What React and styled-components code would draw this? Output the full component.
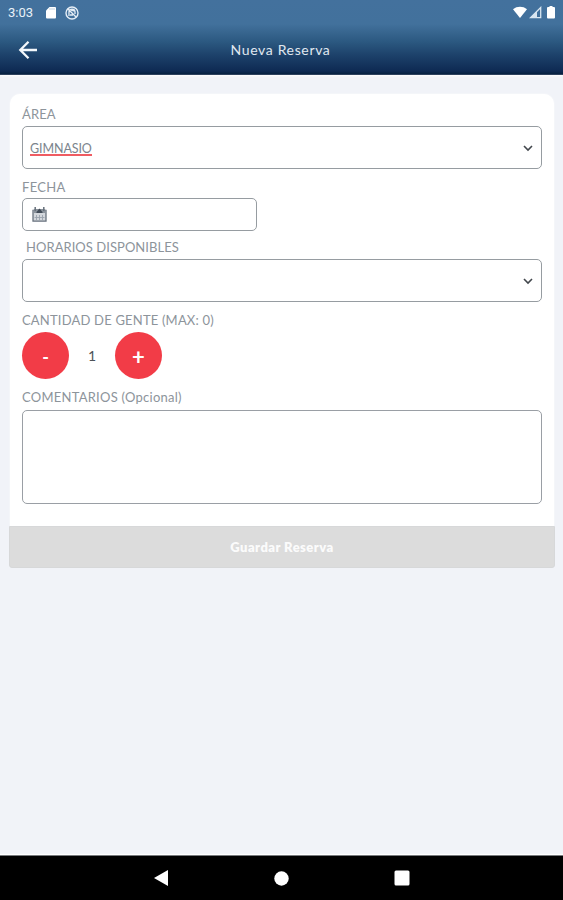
import React from "react";
import styled, { createGlobalStyle } from "styled-components";

const GlobalStyle = createGlobalStyle`
  *, *::before, *::after { box-sizing: border-box; }
  body { margin: 0; background: #f1f3f8; }
  button, input, textarea { font: inherit; }
`;

const Screen = styled.div`
  display: flex;
  flex-direction: column;
  height: 900px;
  background: #f1f3f8;
  font-family: Lato, "Noto Sans", sans-serif;
  color: #7b838c;
`;

const TopArea = styled.header`
  height: 75px;
  flex: none;
  background: linear-gradient(#43719d 0, #42719c 24px, #2b5880 42px, #1c4069 56px, #0e2a53 71px, #06203f 74px, #53617c 75px);
  color: #fff;
  box-shadow: 0 1px 2px #fff;
`;

const StatusBar = styled.div`
  display: flex;
  align-items: center;
  height: 25px;
  padding: 0 6px 0 8px;
  font: 13px/25px Roboto, sans-serif;
  color: #e9f1f8;
`;

const Clock = styled.span`
  width: 37px;
`;

const StatusIcons = styled.div`
  display: flex;
  align-items: center;
  gap: ${(p) => p.$gap}px;
  margin-left: ${(p) => (p.$end ? "auto" : 0)};
  svg { display: block; }
`;

const AppBar = styled.div`
  display: grid;
  grid-template-columns: 56px 1fr 56px;
  align-items: center;
  height: 50px;
`;

const BackButton = styled.button`
  display: flex;
  padding: 0 0 0 18px;
  border: 0;
  background: none;
  color: #f4f8fc;
`;

const Title = styled.h1`
  margin: 0;
  text-align: center;
  font-size: 14px;
  font-weight: 400;
  line-height: 20px;
  letter-spacing: 0.65px;
  color: #e0e8f0;
  padding-right: 2px;
`;

const Main = styled.main`
  flex: 1;
  padding: 19px 8px 0 9px;
`;

const Card = styled.section`
  margin: 0 1px;
  height: 432px;
  padding: 8px 12px 0;
  background: #fff;
  border-radius: 10px 10px 0 0;
  box-shadow: 0 0 2px rgba(255, 255, 255, 0.9);
`;

const Label = styled.div`
  height: ${(p) => p.$height}px;
  margin-top: ${(p) => p.$gap || 0}px;
  padding-left: ${(p) => p.$indent || 0}px;
  font-size: 13px;
  line-height: ${(p) => p.$height}px;
  letter-spacing: ${(p) => p.$spacing || 0}px;
  white-space: nowrap;
  color: #8d949b;
`;

const Field = styled.div`
  display: flex;
  align-items: center;
  justify-content: space-between;
  width: ${(p) => (p.$width ? `${p.$width}px` : "100%")};
  height: ${(p) => p.$height}px;
  padding: 0 8px 0 7px;
  border: 1px solid #969ca1;
  border-radius: 5px;
  background: #fff;
`;

const Value = styled.span`
  margin-top: 2px;
  height: 15px;
  font-size: 12.5px;
  line-height: 15px;
  letter-spacing: -0.1px;
  color: #7b848d;
  border-bottom: ${(p) => (p.$flagged ? "2px solid #ef5c62" : "0")};
`;

const Stepper = styled.div`
  display: flex;
  align-items: center;
  height: 47px;
`;

const RoundButton = styled.button`
  display: flex;
  align-items: center;
  justify-content: center;
  width: 47px;
  height: 47px;
  padding: 2px 0 0;
  border: 0;
  border-radius: 50%;
  background: #f23c47;
  color: #fff;
  font-size: ${(p) => p.$size}px;
  font-weight: 700;
  line-height: 20px;
`;

const Count = styled.span`
  width: 46px;
  text-align: center;
  font-size: 14px;
  color: #4d5257;
`;

const Comments = styled.textarea`
  display: block;
  width: 100%;
  height: 94px;
  border: 1px solid #9a9fa5;
  border-radius: 5px;
  background: #fff;
  resize: none;
  outline: none;
`;

const SaveButton = styled.button`
  display: block;
  width: 100%;
  height: 42px;
  padding: 0 0 1px;
  border: 1px solid #d7d8d9;
  border-radius: 0 0 3px 3px;
  background: #dcdcdc;
  color: #fbfbfb;
  font-size: 13px;
  font-weight: 800;
  letter-spacing: 0.45px;
`;

const NavBar = styled.nav`
  display: grid;
  grid-template-columns: repeat(3, 120.5px);
  justify-content: center;
  align-items: center;
  justify-items: center;
  flex: none;
  height: 45px;
  border-top: 1px solid #777a7d;
  background: #000;
  box-shadow: 0 -1px 1px #fff;
  svg { display: block; }
`;

const Chevron = () => (
  <svg width="10" height="8" viewBox="0 0 10 8" fill="none" stroke="#42474c" strokeWidth="1.6">
    <path d="M1 2l4 4 4-4" />
  </svg>
);

const Calendar = () => (
  <svg width="18" height="17" viewBox="-2 0 18 17">
    <path d="M1 4.5h13v10.7H1z" fill="#d3d7dc" stroke="#68727d" strokeWidth="1.3" />
    <path d="M1 4.5L2.5 3h10L14 4.5V7H1z" fill="#8b939c" />
    <path d="M3.2 1v4M11.8 1v4" stroke="#66707b" strokeWidth="1.5" />
    <path d="M4.5 6L7.5 2.5l3 3.5v1h-6z" fill="#424c58" />
    <path d="M4.5 9v5M7.5 9v5M10.5 9v5M2.5 11.5h10" stroke="#9aa3ad" strokeWidth=".9" />
  </svg>
);

export default function App() {
  return (
    <Screen>
      <GlobalStyle />
      <TopArea>
        <StatusBar>
          <Clock>3:03</Clock>
          <StatusIcons $gap={8}>
            <svg width="12" height="13" viewBox="0 0 12 13">
              <path d="M4.5 1H10a1 1 0 011 1v9.5a1 1 0 01-1 1H2a1 1 0 01-1-1v-7z" fill="#fff" />
              <path d="M5 2v2M7 2v2M9 2v2" stroke="#a9c0d4" strokeWidth=".7" />
            </svg>
            <svg width="14" height="14" viewBox="0 0 14 14" fill="none" stroke="#e6eef6">
              <circle cx="7" cy="7" r="6" strokeWidth="1.4" />
              <path d="M2.7 2.7l8.6 8.6M4 10V6.5a3 3 0 016-.6V8M6 4l4 1M5 9h3" strokeWidth="1.3" />
            </svg>
          </StatusIcons>
          <StatusIcons $end $gap={2}>
            <svg width="14" height="13" viewBox="0 0 14 13">
              <path d="M0 3.2C4-.1 10-.1 14 3.2L7 12z" fill="#fff" />
            </svg>
            <svg width="13" height="13" viewBox="0 0 13 13">
              <path d="M1.5 11.7L11.7 1.5v10.2z" fill="none" stroke="#d8e5f0" strokeWidth="1.3" />
              <path d="M1 12L8 5v7z" fill="#d8e5f0" />
            </svg>
            <svg width="13" height="13" viewBox="0 0 13 13">
              <path d="M5.5 0h3v1H10a1 1 0 011 1v9.5a1 1 0 01-1 1H4a1 1 0 01-1-1V2a1 1 0 011-1h1.5z" fill="#fff" />
            </svg>
          </StatusIcons>
        </StatusBar>
        <AppBar>
          <BackButton aria-label="Volver">
            <svg width="20" height="20" viewBox="0 0 20 20" fill="none" stroke="currentColor" strokeWidth="2.3">
              <path d="M19 10H3M10.5 1.8L2.3 10l8.2 8.2" />
            </svg>
          </BackButton>
          <Title>Nueva Reserva</Title>
        </AppBar>
      </TopArea>

      <Main>
        <Card>
          <Label $height={24} $spacing={0.1}>ÁREA</Label>
          <Field $height={43}>
            <Value $flagged>GIMNASIO</Value>
            <Chevron />
          </Field>
          <Label $gap={7} $height={22} $spacing={0.3}>FECHA</Label>
          <Field $width={235} $height={33}>
            <Calendar />
          </Field>
          <Label $gap={5} $height={23} $indent={4} $spacing={0.05}>HORARIOS DISPONIBLES</Label>
          <Field $height={43}>
            <Value />
            <Chevron />
          </Field>
          <Label $gap={7} $height={23} $spacing={0.19}>CANTIDAD DE GENTE (MAX: 0)</Label>
          <Stepper>
            <RoundButton $size={18}>-</RoundButton>
            <Count>1</Count>
            <RoundButton $size={22}>+</RoundButton>
          </Stepper>
          <Label $gap={5} $height={26} $spacing={0.25}>COMENTARIOS (Opcional)</Label>
          <Comments />
        </Card>
        <SaveButton>Guardar Reserva</SaveButton>
      </Main>

      <NavBar>
        <svg width="14" height="16" viewBox="0 0 14 16"><path d="M0 8L14 0v16z" fill="#fff" /></svg>
        <svg width="15" height="15" viewBox="0 0 15 15"><circle cx="7.5" cy="7.5" r="7.2" fill="#fff" /></svg>
        <svg width="16" height="16" viewBox="0 0 16 16"><rect x=".5" y=".5" width="15" height="15" rx="1.5" fill="#fff" /></svg>
      </NavBar>
    </Screen>
  );
}
